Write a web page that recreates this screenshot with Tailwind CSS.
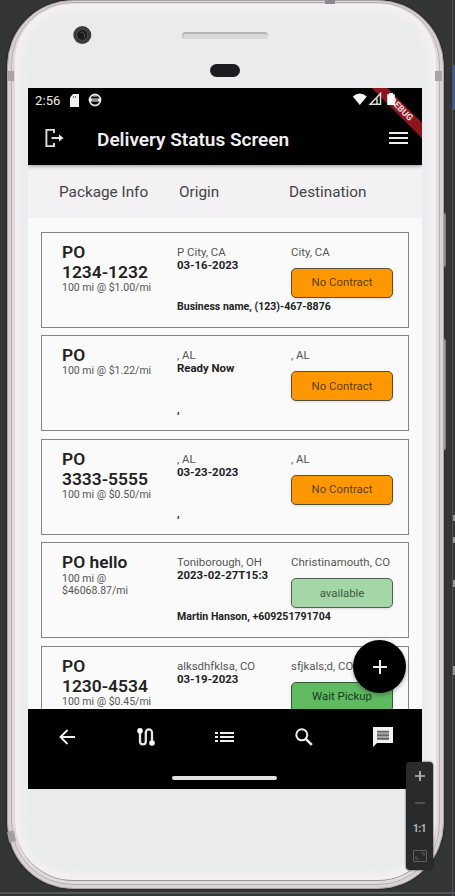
<!DOCTYPE html>
<html lang="en">
<head>
<meta charset="utf-8">
<title>Delivery Status Screen</title>
<script src="https://cdn.jsdelivr.net/npm/@tailwindcss/browser@4"></script>
</head>
<body class="w-[455px] h-[896px] overflow-hidden bg-[#343537] font-['Roboto','Liberation_Sans',sans-serif]">
<div class="relative w-[455px] h-[896px] overflow-hidden pl-[7px]">
  <!-- editor edges -->
  <div class="absolute left-0 top-[892px] w-full h-[2px] bg-[#55565b]"></div>
  <div class="absolute left-[452px] top-0 w-px h-full bg-[#505157]"></div>
  <div class="absolute left-[453px] top-[65px] w-[2px] h-[45px] bg-[#405f96]"></div>
  <div class="absolute left-[453px] top-[515px] w-[2px] h-[6px] bg-[#999]"></div>
  <div class="absolute left-[453px] top-[537px] w-[2px] h-[6px] bg-[#999]"></div>
  <div class="absolute left-[453px] top-[580px] w-[2px] h-[7px] bg-[#999]"></div>
  <div class="absolute left-[453px] top-[666px] w-[2px] h-[9px] bg-[#999]"></div>
  <!-- side buttons -->
  <div class="absolute left-[441px] top-[212px] w-[5px] h-[56px] rounded-r-sm bg-[#c3bdc1] border-r border-[#89858a]"></div>
  <div class="absolute left-[441px] top-[338px] w-[5px] h-[113px] rounded-r-sm bg-[#d3cdd1] border-r border-[#89858a]"></div>

  <!-- phone body -->
  <div class="relative w-[437px] h-[889px] rounded-[66px] border border-[#aaa3a8] bg-[#d8d1d6] px-[3px] pt-px pb-[3px] shadow-[0_0_2px_#151515]">
    <div class="w-full h-full rounded-[62px] border border-[#b7afb5] bg-[#e0d9de] px-[3px] pt-px pb-[3px]">
      <div class="w-full h-full rounded-[58px] border-b border-[#99949a] bg-[#e9ebed] shadow-[inset_0_0_13px_5px_#f6f1f6]"></div>
    </div>
  </div>
  <div class="absolute left-[8px] top-[71px] w-[6px] h-[10px] bg-[#aaa4a9]"></div>
  <div class="absolute left-[435px] top-[71px] w-[7px] h-[10px] bg-[#aaa4a9]"></div>
  <div class="absolute left-[8px] top-[831px] w-[7px] h-[11px] -rotate-12 bg-[#a59fa4]"></div>
  <div class="absolute left-[325px] top-0 w-[10px] h-[4px] bg-[#8d888d]"></div>

  <!-- camera, speaker, sensor -->
  <svg class="absolute left-[73px] top-[26px]" width="19" height="19" viewBox="0 0 19 19"><circle cx="9.3" cy="9" r="9" fill="#3a3b3d"/><circle cx="9.3" cy="9" r="5.4" fill="#191a1c" stroke="#4a4c4f"/><path d="M7.5 6.5a3 3 0 0 1 4 1v4" fill="none" stroke="#4f5154"/></svg>
  <div class="absolute left-[182px] top-[32px] w-[86px] h-[7px] rounded-sm bg-[#d9dadc] border-t-2 border-l border-[#b3b4b9]"></div>
  <div class="absolute left-[210px] top-[64px] w-[30px] h-[13px] rounded-full bg-[#1b1c1f]"></div>

  <!-- screen -->
  <main class="absolute left-[28px] top-[88px] w-[394px] h-[701px] overflow-hidden bg-[#fafafa] flex flex-col text-[#222]">
    <header class="relative z-10 shrink-0 h-[77px] bg-black text-[#eee] shadow-[0_1px_4px_rgba(0,0,0,.4)]">
      <div class="flex items-center h-[24px] pl-[7px] pr-[24px]">
        <span class="text-[13px] leading-none w-[35px] tracking-[0.1px]">2:56</span>
        <svg width="9" height="13" viewBox="0 0 9 13"><path d="M3 0h6v13H0V3.500z" fill="#f2f2f2"/><path d="M3.500 2v2M5.500 2v2" stroke="#777"/></svg>
        <svg class="ml-[9px]" width="14" height="14" viewBox="0 0 14 14"><circle cx="7" cy="7" r="5.500" fill="none" stroke="#ddd" stroke-width="1.800"/><path d="M1 7h12" stroke="#eee" stroke-width="3"/><path d="M4 7h6" stroke="#333"/><path d="M5 3h4" stroke="#ddd"/></svg>
      </div>
      <div class="flex items-center h-[52px] pl-[17px] pr-[14px]">
        <svg width="20" height="20" viewBox="0 0 20 20" fill="none" stroke="#ddd" stroke-width="1.900"><path d="M9 5V1.900H1.400v16.200H9V15M6.500 10h10"/><path d="M14 6.500l4.500 3.500-4.500 3.500z" fill="#eee" stroke="none"/></svg>
        <h1 class="ml-[32px] grow whitespace-nowrap pt-[2px] text-[19px] leading-none font-semibold">Delivery Status Screen</h1>
        <svg width="19" height="14" viewBox="0 0 19 14" stroke="#eee" stroke-width="2"><path d="M0 2h19M0 7h19M0 12h19"/></svg>
      </div>
      <div class="absolute right-0 top-0 w-[54px] h-[54px] overflow-hidden">
        <div class="absolute left-[-14px] top-[16px] w-[94px] h-[11px] rotate-45 bg-[#8d161e] text-[#f1dfe0] text-[9px] leading-[11px] font-bold text-center">DEBUG</div>
      </div>
      <svg class="absolute left-[324px] top-[4px]" width="45" height="16" viewBox="0 0 45 16"><path d="M.8 4.500Q7.800-1.500 14.800 4.500L7.800 13z" fill="#f5f5f5"/><path d="M28.500 1.500V12.300H18.200zM25 6.500v5.500" fill="none" stroke="#ddd" stroke-width="1.500"/><path d="M37 1h4v1.200h1.800V13H35.200V2.200H37z" fill="#fff"/></svg>
    </header>

    <div class="flex shrink-0 h-[53px] items-center pt-[3px] pl-[31px] bg-[#f3f1f4] text-[#444] text-[15.300px] leading-none whitespace-nowrap">
      <span class="w-[120px]">Package Info</span>
      <span class="w-[110px]">Origin</span>
      <span>Destination</span>
    </div>

    <section class="flex h-[402px] grow flex-col gap-[7.500px] overflow-hidden pl-[13px] pr-[13px] pt-[13.700px]">
      <article class="flex h-[96px] shrink-0 border border-[#858585] pl-[20px] pt-[9px]">
        <div class="w-[115px] shrink-0"><h2 class="text-[17.400px] leading-[20px] font-semibold">PO<br>1234-1232</h2><p class="text-[10.500px] leading-[12px] text-[#555] whitespace-nowrap">100 mi @ $1.00/mi</p></div>
        <div class="w-[114px] shrink-0 pt-[4px] text-[11.400px] leading-[13px] whitespace-nowrap"><p class="text-[#555]">P City, CA</p><p class="font-bold">03-16-2023</p><p class="mt-[28px] text-[10.550px] leading-[13px] font-bold">Business name, (123)-467-8876</p></div>
        <div class="pt-[4px] text-[11.400px] leading-[13px] whitespace-nowrap"><p class="text-[#555]">City, CA</p><div class="mt-[9px] flex h-[30px] w-[102px] items-center justify-center rounded-[5px] border border-[#57503a] bg-[#ff9800] text-[#5a4008] shadow-sm">No Contract</div></div>
      </article>
      <article class="flex h-[96px] shrink-0 border border-[#858585] pl-[20px] pt-[9px]">
        <div class="w-[115px] shrink-0"><h2 class="text-[17.400px] leading-[20px] font-semibold">PO</h2><p class="text-[10.500px] leading-[12px] text-[#555] whitespace-nowrap">100 mi @ $1.22/mi</p></div>
        <div class="w-[114px] shrink-0 pt-[4px] text-[11.400px] leading-[13px] whitespace-nowrap"><p class="text-[#555]">, AL</p><p class="font-bold">Ready Now</p><p class="mt-[28px] text-[10.550px] leading-[13px] font-bold">,</p></div>
        <div class="pt-[4px] text-[11.400px] leading-[13px] whitespace-nowrap"><p class="text-[#555]">, AL</p><div class="mt-[9px] flex h-[30px] w-[102px] items-center justify-center rounded-[5px] border border-[#57503a] bg-[#ff9800] text-[#5a4008] shadow-sm">No Contract</div></div>
      </article>
      <article class="flex h-[96px] shrink-0 border border-[#858585] pl-[20px] pt-[9px]">
        <div class="w-[115px] shrink-0"><h2 class="text-[17.400px] leading-[20px] font-semibold">PO<br>3333-5555</h2><p class="text-[10.500px] leading-[12px] text-[#555] whitespace-nowrap">100 mi @ $0.50/mi</p></div>
        <div class="w-[114px] shrink-0 pt-[4px] text-[11.400px] leading-[13px] whitespace-nowrap"><p class="text-[#555]">, AL</p><p class="font-bold">03-23-2023</p><p class="mt-[28px] text-[10.550px] leading-[13px] font-bold">,</p></div>
        <div class="pt-[4px] text-[11.400px] leading-[13px] whitespace-nowrap"><p class="text-[#555]">, AL</p><div class="mt-[9px] flex h-[30px] w-[102px] items-center justify-center rounded-[5px] border border-[#57503a] bg-[#ff9800] text-[#5a4008] shadow-sm">No Contract</div></div>
      </article>
      <article class="flex h-[96px] shrink-0 border border-[#858585] pl-[20px] pt-[9px]">
        <div class="w-[115px] shrink-0"><h2 class="text-[17.400px] leading-[20px] font-semibold">PO hello</h2><p class="text-[10.500px] leading-[12px] pt-px text-[#555]">100 mi @<br>$46068.87/mi</p></div>
        <div class="w-[114px] shrink-0 pt-[4px] text-[11.400px] leading-[13px] whitespace-nowrap"><p class="text-[#555]">Toniborough, OH</p><p class="font-bold">2023-02-27T15:3</p><p class="mt-[28px] text-[10.550px] leading-[13px] font-bold">Martin Hanson, +609251791704</p></div>
        <div class="pt-[4px] text-[11.400px] leading-[13px] whitespace-nowrap"><p class="text-[#555] tracking-[0.05px]">Christinamouth, CO</p><div class="mt-[9px] flex h-[30px] w-[102px] items-center justify-center rounded-[5px] border border-[#4d6350] bg-[#a5d6a7] text-[#3f5a43] shadow-sm">available</div></div>
      </article>
      <article class="flex h-[96px] shrink-0 border border-[#858585] pl-[20px] pt-[9px]">
        <div class="w-[115px] shrink-0"><h2 class="text-[17.400px] leading-[20px] font-semibold">PO<br>1230-4534</h2><p class="text-[10.500px] leading-[12px] text-[#555] whitespace-nowrap">100 mi @ $0.45/mi</p></div>
        <div class="w-[114px] shrink-0 pt-[4px] text-[11.400px] leading-[13px] whitespace-nowrap"><p class="text-[#555]">alksdhfklsa, CO</p><p class="font-bold">03-19-2023</p></div>
        <div class="pt-[4px] text-[11.400px] leading-[13px] whitespace-nowrap"><p class="text-[#555]">sfjkals;d, CO</p><div class="mt-[9px] flex h-[30px] w-[102px] items-center justify-center rounded-[5px] border border-[#355c37] bg-[#5fba62] text-[#193a1b] shadow-sm">Wait Pickup</div></div>
      </article>
    </section>

    <div class="absolute left-[325px] top-[552px] flex size-[53px] items-center justify-center rounded-full bg-black shadow-[0_2px_4px_rgba(0,0,0,.3)]">
      <svg width="14" height="14" viewBox="0 0 14 14" stroke="#eee" stroke-width="2"><path d="M7 0v14M0 7h14"/></svg>
    </div>

    <nav class="relative h-[80px] shrink-0 bg-black">
      <div class="flex h-[56px] items-center">
        <div class="flex w-1/5 justify-center"><svg width="16" height="16" viewBox="0 0 16 16" fill="none" stroke="#eee" stroke-width="1.900"><path d="M16 8H1.500M8.500 1L1.500 8l7 7"/></svg></div>
        <div class="flex w-1/5 justify-center"><svg width="18" height="18" viewBox="0 0 18 18"><path d="M3 3v10.500a2.900 2.900 0 0 0 5.800 0v-9a3.100 3.100 0 0 1 6.200 0V15" fill="none" stroke="#e6e6e6" stroke-width="2.300"/><circle cx="3" cy="2.800" r="2.800" fill="#fff"/><circle cx="15" cy="15" r="2.800" fill="#fff"/></svg></div>
        <div class="flex w-1/5 justify-center"><svg width="19" height="12" viewBox="0 0 19 12" stroke="#eee" stroke-width="2"><path d="M0 2h3M5 2h14M0 6h3M5 6h14M0 10h3M5 10h14"/></svg></div>
        <div class="flex w-1/5 justify-center"><svg width="18" height="18" viewBox="0 0 18 18" fill="none" stroke="#eee" stroke-width="2"><circle cx="6.800" cy="6.800" r="5.500"/><path d="M10.800 10.800l6 6" stroke-width="2.600"/></svg></div>
        <div class="flex w-1/5 justify-center"><svg width="20" height="20" viewBox="0 0 20 20"><path d="M0 0h20v16H4l-4 4z" fill="#f2f2f2"/><path d="M4 4h12v8.500H4z" fill="#a5a5a5"/><path d="M4 4.500h12M4 8.200h12M4 11.900h12" stroke="#666" stroke-width="1.600"/></svg></div>
      </div>
      <div class="absolute left-[144px] top-[67px] h-[4px] w-[105px] rounded-full bg-[#e2e2e2]"></div>
    </nav>
  </main>

  <!-- emulator zoom controls -->
  <div class="absolute left-[406px] top-[762px] flex h-[108px] w-[27px] flex-col items-center justify-around rounded-[4px] bg-[#292a2c] py-px shadow-[0_0_2px_#111]">
    <svg width="12" height="12" viewBox="0 0 12 12" stroke="#b8b8b8" stroke-width="1.700"><path d="M6 1v10M1 6h10"/></svg>
    <svg width="12" height="12" viewBox="0 0 12 12" stroke="#626365" stroke-width="1.400"><path d="M1 6h10"/></svg>
    <span class="text-[10px] leading-[12px] font-bold tracking-[-0.4px] text-[#bbb]">1:1</span>
    <svg width="14" height="12" viewBox="0 0 14 12" fill="none" stroke="#606163"><path d="M.5.500h13v11H.500zM8 3h3v3M3 6v3h3"/></svg>
  </div>
</div>
</body>
</html>
